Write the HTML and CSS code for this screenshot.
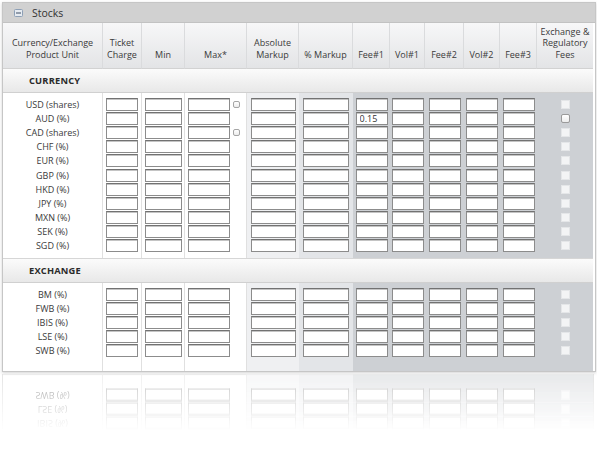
FILE: index.html
```html
<!DOCTYPE html>
<html lang="en">
<head>
  <meta charset="UTF-8" />
  <title>Stocks</title>
  <link rel="stylesheet" href="styles.css">
</head>
<body>
  <div class="panel" id="panel">
    <div class="panel-title">
      <svg class="toggle" width="9" height="8" viewBox="0 0 9 8">
        <rect x="0.5" y="0.5" width="8" height="7" rx="1" fill="#e6ebf1" stroke="#8ea0b6"/>
        <rect x="2" y="3.5" width="5" height="1" fill="#3d4f66"/>
      </svg>
      <span>Stocks</span>
    </div>
    <table class="fees">
      <colgroup id="cols">
        <col class="c-unit"><col class="c-ticket"><col class="c-min"><col class="c-max">
        <col class="c-abs"><col class="c-markup">
        <col class="c-fee"><col class="c-vol1"><col class="c-fee2"><col class="c-vol2"><col class="c-fee">
        <col class="c-exch">
      </colgroup>
      <thead>
        <tr>
          <th>Currency/Exchange<br>Product Unit</th>
          <th>Ticket<br>Charge</th>
          <th>Min</th>
          <th>Max*</th>
          <th>Absolute<br>Markup</th>
          <th>% Markup</th>
          <th>Fee#1</th>
          <th>Vol#1</th>
          <th>Fee#2</th>
          <th>Vol#2</th>
          <th>Fee#3</th>
          <th>Exchange &amp;<br>Regulatory<br>Fees</th>
        </tr>
      </thead>
      <tbody id="currency">
        <tr class="section"><td colspan="12">CURRENCY</td></tr>
      </tbody>
      <tbody id="exchange">
        <tr class="section next"><td colspan="12">EXCHANGE</td></tr>
      </tbody>
    </table>
  </div>
  <div class="reflection" aria-hidden="true">
    <div class="mirror">
      <table class="fees" id="mirror"></table>
    </div>
  </div>

  <script>
    const currency = ['USD (shares)', 'AUD (%)', 'CAD (shares)', 'CHF (%)', 'EUR (%)', 'GBP (%)',
                      'HKD (%)', 'JPY (%)', 'MXN (%)', 'SEK (%)', 'SGD (%)'];
    const exchange = ['BM (%)', 'FWB (%)', 'IBIS (%)', 'LSE (%)', 'SWB (%)'];

    // valores ya cargados
    const preset = { 'AUD (%)': { fee1: '0.15', checked: true } };

    function buildRows(tbody, units, lastClass) {
      units.forEach((unit, i) => {
        const tr = document.createElement('tr');
        if (i === 0) tr.classList.add('first');
        if (i === units.length - 1) tr.classList.add(lastClass);
        const p = preset[unit] || {};
        const maxCb = unit.includes('shares') ? '<input type="checkbox" class="cb">' : '';
        tr.innerHTML =
          `<td class="unit">${unit}</td>` +
          `<td class="sep"><input class="box w-ticket"></td>` +
          `<td class="sep"><input class="box w-min"></td>` +
          `<td class="sep max"><input class="box w-max">${maxCb}</td>` +
          `<td><input class="box w-abs"></td>` +
          `<td><input class="box w-markup"></td>` +
          `<td><input class="box w-fee" value="${p.fee1 || ''}"></td>` +
          `<td><input class="box w-fee"></td>` +
          `<td><input class="box w-fee"></td>` +
          `<td><input class="box w-fee"></td>` +
          `<td><input class="box w-fee"></td>` +
          `<td><span class="fee-cb${p.checked ? ' on' : ''}"></span></td>`;
        tbody.appendChild(tr);
      });
    }

    buildRows(document.getElementById('currency'), currency, 'last');
    buildRows(document.getElementById('exchange'), exchange, 'end');

    // reflejo: solo las ultimas filas del panel
    const mirror = document.getElementById('mirror');
    const cols = document.getElementById('cols').cloneNode(true);
    cols.removeAttribute('id');
    mirror.appendChild(cols);
    const body = document.createElement('tbody');
    [...document.querySelectorAll('#exchange tr')].slice(-3).forEach(tr => body.appendChild(tr.cloneNode(true)));
    mirror.appendChild(body);
  </script>
</body>
</html>
```

FILE: styles.css
```css
body {
  margin: 0;
  background: #fff;
  font-family: "Open Sans", "DejaVu Sans", sans-serif;
  font-size: 9px;
  color: #333;
}

.panel {
  margin: 2px;
  width: 592px;
  border: 1px solid #c6c6c6;
  background: #fff;
  box-shadow: 0 1px 3px rgba(0, 0, 0, 0.18);
}

.reflection {
  margin: 1px 2px 0;
  width: 592px;
  opacity: 0.42;
  -webkit-mask-image: linear-gradient(#000 10%, transparent);
  mask-image: linear-gradient(#000 10%, transparent);
}

.mirror {
  border: 1px solid #c6c6c6;
  border-top: 0;
  transform: scaleY(-1);
}

.panel-title {
  height: 19px;
  display: flex;
  align-items: center;
  gap: 9px;
  padding-left: 11px;
  background: #d1d1d1;
  border-bottom: 1px solid #c2c2c2;
  font-size: 10.5px;
  color: #333;
}

.fees {
  width: 590px;
  table-layout: fixed;
  border-collapse: separate;
  border-spacing: 0;
}

.c-unit { width: 100px; }
.c-ticket { width: 39px; }
.c-min { width: 43px; }
.c-max { width: 62px; }
.c-abs { width: 52px; background: #eff0f2; }
.c-markup { width: 54px; background: #e3e5e8; }
.c-fee { width: 37px; background: #cdd0d4; }
.c-vol1 { width: 35px; background: #cdd0d4; }
.c-fee2 { width: 39px; background: #cdd0d4; }
.c-vol2 { width: 36px; background: #cdd0d4; }
.c-exch { width: 56px; background: #cdd0d4; }

th {
  height: 37px;
  padding: 0 2px 8px;
  vertical-align: bottom;
  font-weight: normal;
  line-height: 11.5px;
  color: #3a3a3a;
  background: linear-gradient(#f7f7f8, #e3e4e6);
  border-right: 1px solid #dadbdd;
  border-bottom: 1px solid #d2d2d2;
}

th:last-child {
  border-right: 0;
}

.section td {
  height: 23px;
  padding: 0 0 0 26px;
  font-weight: bold;
  font-size: 9.3px;
  letter-spacing: 0.2px;
  color: #2b2b2b;
  background: linear-gradient(#fbfbfb, #e8e8e8);
  border-bottom: 1px solid #d0d0d0;
}

.section.next td {
  border-top: 1px solid #d6d6d6;
}

td {
  height: 14.2px;
  padding: 0;
  vertical-align: middle;
}

tr.first td { padding-top: 4px; }
tr.last td { padding-bottom: 5px; }
tr.end td { padding-bottom: 13px; }

.unit {
  text-align: center;
  color: #3a3a3a;
  border-right: 1px solid #e0e0e0;
}

.sep {
  border-right: 1px solid #e0e0e0;
}

.box {
  display: block;
  box-sizing: border-box;
  height: 13px;
  margin: 0 auto;
  padding: 0 0 0 3px;
  font: inherit;
  font-size: 9px;
  color: #333;
  background: #fff;
  border: 1px solid #8c8c8c;
  border-top-color: #727272;
  box-shadow: inset 0 1px 0 #c4c4c4;
  border-radius: 0;
}

.w-ticket { width: 32px; }
.w-min { width: 37px; }
.w-max { width: 42px; margin: 0 0 0 3px; }
.w-abs { width: 45px; }
.w-markup { width: 46px; }
.w-fee { width: 32px; }

.max {
  display: flex;
  align-items: center;
}

.cb {
  appearance: none;
  -webkit-appearance: none;
  width: 7px;
  height: 7px;
  margin: 0 0 0 3px;
  border: 1px solid #a5a5a5;
  border-radius: 2px;
  background: linear-gradient(#fff, #ececec);
}

.fee-cb {
  display: block;
  width: 7px;
  height: 7px;
  margin: 0 auto;
  background: #f3f4f5;
  border: 1px solid #e4e6e8;
}

.fee-cb.on {
  border-color: #9a9a9a;
  border-radius: 2px;
  background: linear-gradient(#fff, #ececec);
}
```
